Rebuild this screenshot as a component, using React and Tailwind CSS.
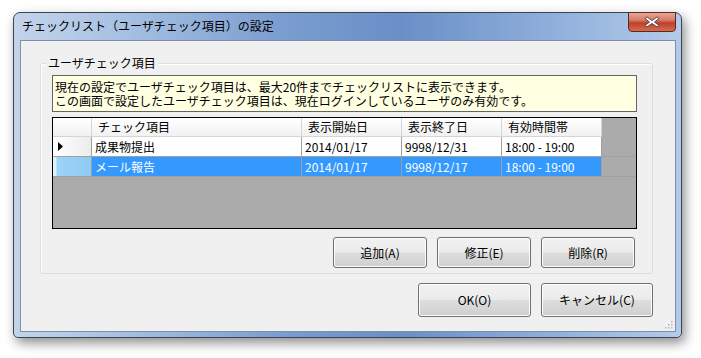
import React from "react";

const font = { fontFamily: '"Noto Sans CJK JP", "Noto Sans", sans-serif' };

function Btn({ children, w, h }) {
  return (
    <div
      className={`${w} ${h} flex items-center justify-center rounded-[3px] border border-[#707070] text-[12px] text-black shadow-[inset_0_0_0_1px_#fcfcfc]`}
      style={{ background: "linear-gradient(to bottom, #f2f2f2 0%, #ebebeb 48%, #dddddd 52%, #cfcfcf 100%)" }}
    >
      {children}
    </div>
  );
}

function Cell({ w, children, sel, header }) {
  return (
    <div
      className={`${w} h-full flex items-center shrink-0 border-r ${header ? "border-[#d5d5d5] pl-[6px]" : "border-[#a0a0a0] pl-[3px]"} ${sel ? "text-white" : "text-black"} whitespace-nowrap overflow-hidden`}
    >
      {children}
    </div>
  );
}

export default function App() {
  const rows = [
    { name: "成果物提出", s: "2014/01/17", e: "9998/12/31", t: "18:00 - 19:00", sel: false, cur: true },
    { name: "メール報告", s: "2014/01/17", e: "9998/12/17", t: "18:00 - 19:00", sel: true, cur: false },
  ];
  return (
    <div className="w-[701px] h-[358px] bg-white overflow-hidden" style={font}>
      <div
        className="ml-[13px] mt-[12px] w-[669px] h-[326px] rounded-t-[7px] rounded-b-[5px] border border-[#3a4452] relative shadow-[3px_5px_12px_rgba(0,0,0,0.45)] flex flex-col pl-[6px] pr-[5px] pb-[5px]"
        style={{ background: "linear-gradient(to right, #c3d4ea 0%, #a9c2e3 15%, #7b9dcf 40%, #6a8fc7 58%, #8eaedb 80%, #b4cbe8 100%)" }}
      >
        {/* Title bar */}
        <div className="h-[27px] shrink-0 flex items-center pl-[2px] text-[12px] text-black pb-[1px]">
          チェックリスト（ユーザチェック項目）の設定
        </div>
        {/* Close button */}
        <div
          className="absolute top-[-1px] right-[5px] w-[48px] h-[20px] rounded-b-[4px] border border-[#5a2a22] flex items-center justify-center"
          style={{ background: "linear-gradient(to bottom, #e8a898 0%, #d47a66 40%, #c0402a 55%, #d86a50 100%)" }}
        >
          <svg width="16" height="12" viewBox="0 0 16 12">
            <path d="M3 1 L8 4.5 L13 1 L15 2.5 L10.5 6 L15 9.5 L13 11 L8 7.5 L3 11 L1 9.5 L5.5 6 L1 2.5 Z" fill="#ffffff" stroke="#4a3a3a" strokeWidth="0.9" strokeLinejoin="round" />
          </svg>
        </div>

        {/* Client area */}
        <div className="w-[656px] h-[292px] bg-[#f0f0f0] border border-[#7d90aa] flex flex-col pl-[19px] pt-[22px] relative">
          {/* Group box */}
          <div className="w-[613px] h-[211px] relative rounded-[3px] border border-[#d5dfe5] shadow-[inset_1px_1px_0_#ffffff] flex flex-col pl-[11px] pt-[11px] pr-[15px]">
            <div className="absolute top-[-9px] left-[5px] bg-[#f0f0f0] px-[2px] text-[12px] leading-[16px] text-black">
              ユーザチェック項目
            </div>
            <div className="w-[585px] h-[37px] shrink-0 bg-[#ffffe1] border border-[#646464] flex flex-col justify-center pl-[2px] text-[12px] leading-[14px] text-black">
              <div>現在の設定でユーザチェック項目は、最大20件までチェックリストに表示できます。</div>
              <div>この画面で設定したユーザチェック項目は、現在ログインしているユーザのみ有効です。</div>
            </div>
            {/* Grid */}
            <div className="mt-[5px] w-[585px] h-[112px] shrink-0 bg-[#ababab] border border-black flex flex-col text-[12px]">
              <div className="h-[19px] flex shrink-0">
                <div className="w-[39px] h-full shrink-0 border-r border-b border-[#d5d5d5]" style={{ background: "linear-gradient(to bottom, #ffffff, #f1f1f1)" }} />
                {[
                  ["w-[210px]", "チェック項目"],
                  ["w-[100px]", "表示開始日"],
                  ["w-[100px]", "表示終了日"],
                  ["w-[100px]", "有効時間帯"],
                ].map(([w, t]) => (
                  <div
                    key={t}
                    className={`${w} h-full shrink-0 flex items-center pl-[6px] border-r border-b border-[#d5d5d5] text-black`}
                    style={{ background: "linear-gradient(to bottom, #ffffff, #f1f1f1)" }}
                  >
                    {t}
                  </div>
                ))}
              </div>
              {rows.map((r) => (
                <div key={r.name} className="h-[20px] flex shrink-0 border-b border-[#a0a0a0]">
                  <div
                    className="w-[39px] h-full shrink-0 border-r border-[#a0a0a0] flex items-center pl-[5px] relative"
                    style={{
                      background: r.sel
                        ? "linear-gradient(to right, #dff1fd 0px, #dff1fd 3px, #9dd3f6 4px, #8ccbf4 100%)"
                        : "linear-gradient(to right, #ffffff, #ececec)",
                    }}
                  >
                    {r.cur && (
                      <svg width="5" height="9" viewBox="0 0 5 9">
                        <path d="M0 0 L5 4.5 L0 9 Z" fill="#000" />
                      </svg>
                    )}
                  </div>
                  <div className={`flex h-full ${r.sel ? "bg-[#3399ff]" : "bg-white"}`}>
                    <Cell w="w-[210px]" sel={r.sel}>{r.name}</Cell>
                    <Cell w="w-[100px]" sel={r.sel}>{r.s}</Cell>
                    <Cell w="w-[100px]" sel={r.sel}>{r.e}</Cell>
                    <Cell w="w-[100px]" sel={r.sel}>{r.t}</Cell>
                  </div>
                </div>
              ))}
            </div>
            {/* buttons */}
            <div className="mt-[8px] flex justify-end gap-[10px] pr-[2px]">
              <Btn w="w-[94px]" h="h-[31px]">追加(A)</Btn>
              <Btn w="w-[94px]" h="h-[31px]">修正(E)</Btn>
              <Btn w="w-[94px]" h="h-[31px]">削除(R)</Btn>
            </div>
          </div>
          <div className="mt-[9px] w-[613px] flex justify-end gap-[10px]">
            <Btn w="w-[113px]" h="h-[34px]">OK(O)</Btn>
            <Btn w="w-[112px]" h="h-[34px]">キャンセル(C)</Btn>
          </div>
          {/* resize grip */}
          <svg className="absolute right-[2px] bottom-[2px]" width="10" height="10" viewBox="0 0 10 10">
            {[[8, 2], [8, 5], [5, 5], [8, 8], [5, 8], [2, 8]].map(([x, y], i) => (
              <rect key={i} x={x} y={y} width="1.5" height="1.5" fill="#b8b8b8" />
            ))}
          </svg>
        </div>
      </div>
    </div>
  );
}
